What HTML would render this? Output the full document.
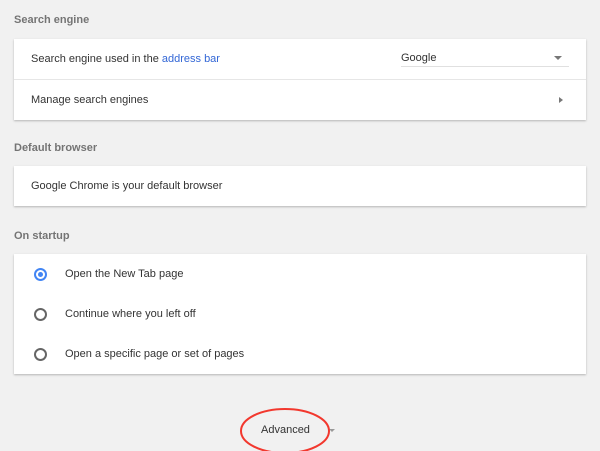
<!DOCTYPE html>
<html><head><style>
body{margin:0;width:600px;height:451px;background:#f1f1f1;font-family:"Liberation Sans",sans-serif;font-size:11px;color:#333;position:relative;overflow:hidden}
.h{position:absolute;left:14px;color:#5f5f5f;font-size:11px;font-weight:bold;opacity:.85}
.card{position:absolute;left:14px;width:572px;background:#fff;box-shadow:0 1px 2px rgba(0,0,0,.25)}
.row{height:40px;position:relative;line-height:40px;padding-left:17px}
.sep{border-top:1px solid #e6e6e6}
.radio{position:absolute;left:20px;top:14px;width:9px;height:9px;border:2px solid #666;border-radius:50%}
.radio.on{border-color:#4285f4}
.radio.on::after{content:"";position:absolute;left:2px;top:2px;width:5px;height:5px;border-radius:50%;background:#4285f4}
.rt{padding-left:51px}
</style></head><body>
<div class="h" style="top:14px">Search engine</div>
<div class="card" style="top:39px">
 <div class="row">Search engine used in the <span style="color:#3367d6">address bar</span>
  <div style="position:absolute;left:387px;top:0;width:168px;height:27px;border-bottom:1px solid #e0e0e0;line-height:38px;padding:0">Google</div>
  <div style="position:absolute;left:540px;top:17px;width:0;height:0;border-left:4px solid transparent;border-right:4px solid transparent;border-top:4px solid #777"></div>
 </div>
 <div class="row sep">Manage search engines
  <div style="position:absolute;left:545px;top:17px;width:0;height:0;border-top:3.5px solid transparent;border-bottom:3.5px solid transparent;border-left:4px solid #777"></div>
 </div>
</div>
<div class="h" style="top:142px">Default browser</div>
<div class="card" style="top:166px"><div class="row">Google Chrome is your default browser</div></div>
<div class="h" style="top:230px">On startup</div>
<div class="card" style="top:254px">
 <div class="row rt"><span class="radio on"></span>Open the New Tab page</div>
 <div class="row rt"><span class="radio"></span>Continue where you left off</div>
 <div class="row rt"><span class="radio"></span>Open a specific page or set of pages</div>
</div>
<div style="position:absolute;left:261px;top:424px;color:#333">Advanced</div>
<div style="position:absolute;left:329px;top:429px;width:0;height:0;border-left:3px solid transparent;border-right:3px solid transparent;border-top:3px solid #999"></div>
<svg style="position:absolute;left:0;top:0" width="600" height="451"><ellipse cx="285" cy="431" rx="44" ry="22" fill="none" stroke="#f2382e" stroke-width="2"/></svg>
</body></html>
